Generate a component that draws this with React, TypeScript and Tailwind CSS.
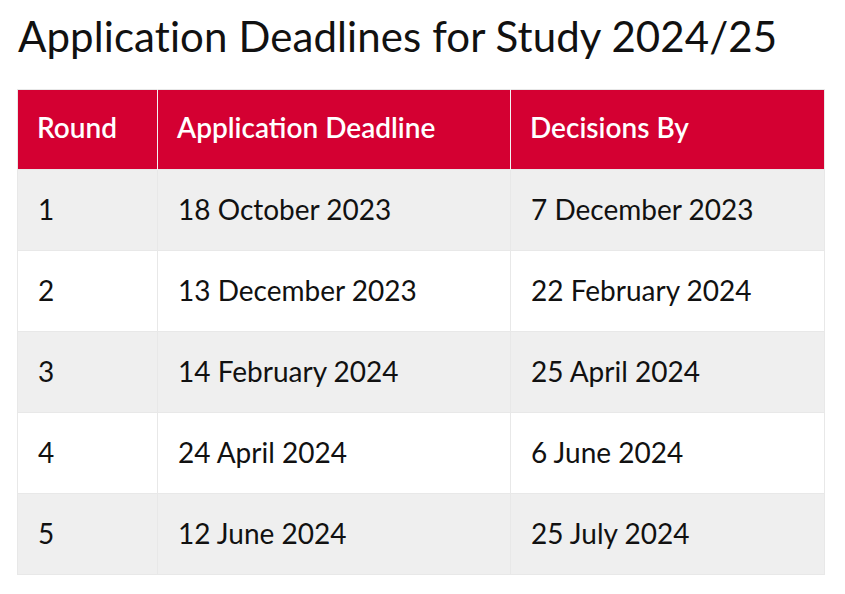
const rows = [
  ["1", "18 October 2023", "7 December 2023"],
  ["2", "13 December 2023", "22 February 2024"],
  ["3", "14 February 2024", "25 April 2024"],
  ["4", "24 April 2024", "6 June 2024"],
  ["5", "12 June 2024", "25 July 2024"],
];

export default function App() {
  return (
    <div className="min-h-screen bg-white px-[17px] pt-[10px] font-['Lato',sans-serif] text-[#111]">
      <h1 className="ml-px text-[42px] leading-[52px] font-normal tracking-[0.1px]">
        Application Deadlines for Study 2024/25
      </h1>
      <table className="mt-[27px] w-[808px] border-collapse border border-[#e8e8e8] text-[28px]">
        <thead>
          <tr className="bg-[#d40032] text-white">
            <th className="h-[80px] w-[140px] border-r border-[#f3f3f3] pb-[6px] pl-[19px] text-left font-semibold">
              Round
            </th>
            <th className="h-[80px] w-[353px] border-r border-[#f3f3f3] pb-[6px] pl-[19px] text-left font-semibold">
              Application Deadline
            </th>
            <th className="h-[80px] pb-[6px] pl-[19px] text-left font-semibold">
              Decisions By
            </th>
          </tr>
        </thead>
        <tbody>
          {rows.map((r, i) => (
            <tr key={r[0]} className={i % 2 === 0 ? "bg-[#efefef]" : "bg-white"}>
              {r.map((c, j) => (
                <td
                  key={j}
                  className="h-[81px] border border-[#e8e8e8] pb-[3px] pl-[20px]"
                >
                  {c}
                </td>
              ))}
            </tr>
          ))}
        </tbody>
      </table>
    </div>
  );
}
